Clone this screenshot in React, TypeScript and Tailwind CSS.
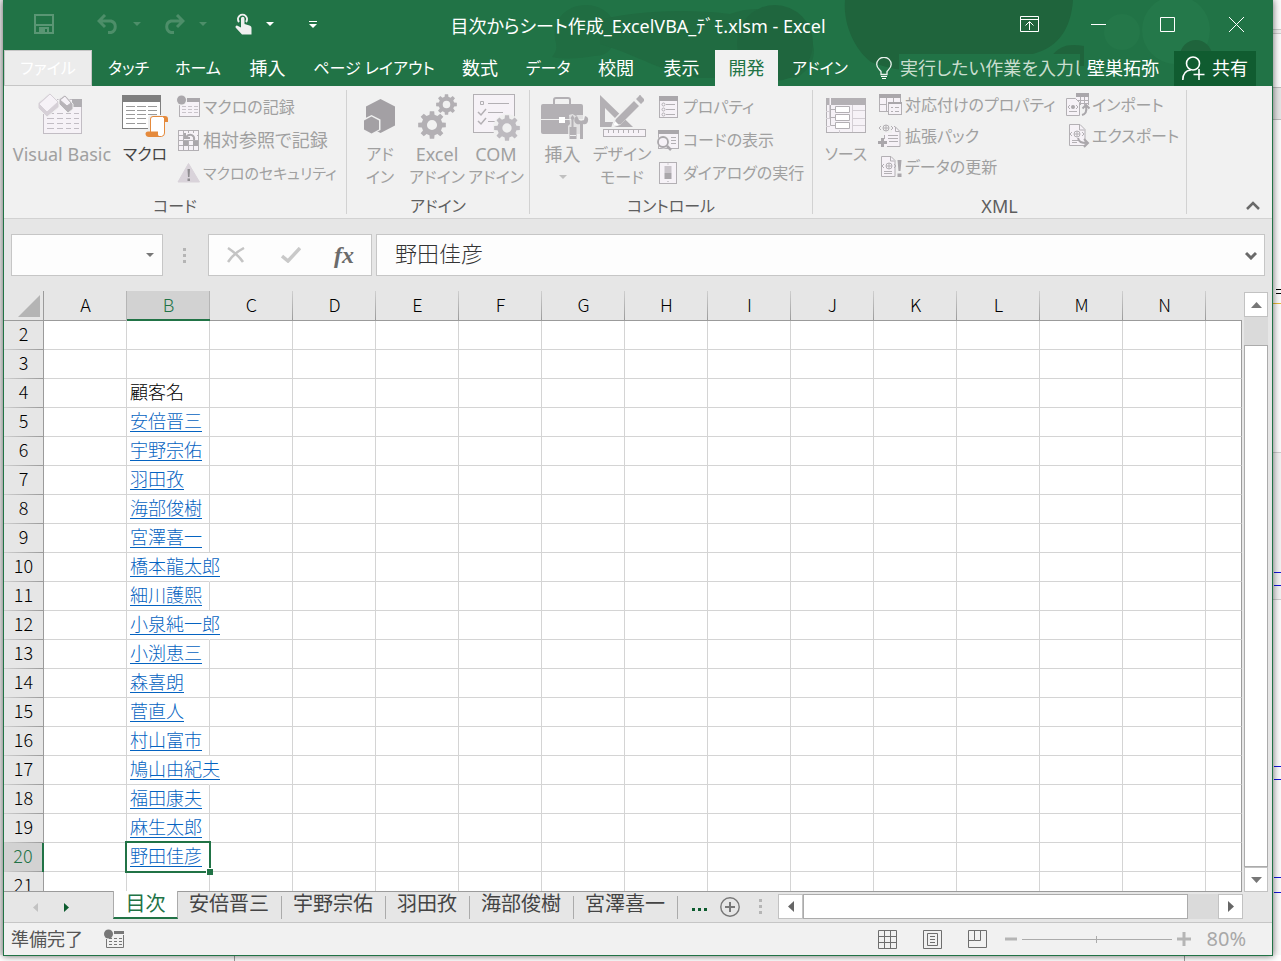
import React from "react";

const INK = "#b3b0b4";
const PALE = "#f6f2f7";

function gearPath(cx: number, cy: number, r: number, teeth: number) {
  const pts: string[] = [];
  const step = (Math.PI * 2) / teeth;
  for (let i = 0; i < teeth; i++) {
    const a = i * step - Math.PI / 2;
    const spots: [number, number][] = [
      [-0.31, 0.75],
      [-0.2, 1],
      [0.2, 1],
      [0.31, 0.75],
    ];
    for (const [d, k] of spots) {
      pts.push(
        `${(cx + Math.cos(a + d * step) * r * k).toFixed(2)} ${(cy + Math.sin(a + d * step) * r * k).toFixed(2)}`
      );
    }
  }
  const h = r * 0.36;
  return `M${pts.join("L")}Z M${cx - h} ${cy}a${h} ${h} 0 1 0 ${2 * h} 0a${h} ${h} 0 1 0 ${-2 * h} 0Z`;
}

function Gear({ cx, cy, r, fill }: { cx: number; cy: number; r: number; fill: string }) {
  return <path d={gearPath(cx, cy, r, 8)} fill={fill} fillRule="evenodd" />;
}

/* ---------- large ribbon icons ---------- */

function VisualBasicIcon() {
  return (
    <svg width="48" height="45" viewBox="38 8 48 45" fill="none" className="overflow-visible" aria-hidden="true">
      <rect x="43.5" y="13.5" width="38" height="34" fill={PALE} stroke="#c2bdc4" />
      <path d="M72 13h10v8H72z" fill="#b0aeb2" />
      <path
        d="M47 27.5h7m3 0h6m3 0h5m3 0h5M47 32.5h7m3 0h6m3 0h5m3 0h5M47 37.5h7m3 0h6m3 0h5m3 0h5M47 42.5h7m3 0h6m3 0h5m3 0h5"
        stroke="#c2bdc4"
      />
      <path d="M50 7l9 9v5L47 31l-9-9v-5z" fill="#d6d0d7" stroke="#f0f0f0" />
      <path d="M50 8l8 8-11 10-8-8z" fill={PALE} stroke="#d6d0d7" />
      <path d="M65 9l8 9v5l-5 4-9-9v-5z" fill="#b8b4b9" stroke="#f0f0f0" />
      <path d="M65 10l6 7-4 3-7-6z" fill={PALE} stroke="#b8b4b9" />
    </svg>
  );
}

function MacroIcon() {
  return (
    <svg width="48" height="45" viewBox="121 8 48 45" fill="none" aria-hidden="true">
      <rect x="122.5" y="9.5" width="38" height="33" fill="#fff" stroke="#7f7f7f" />
      <path d="M122 9h39v7h-39z" fill="#7f7f7f" />
      <path
        d="M126 20.5h9m2 0h9m2 0h9M126 24.500h9m2 0h9m2 0h9M126 28.500h9m2 0h9m2 0h9M126 32.500h9m2 0h9M126 37.500h9m2 0h9"
        stroke="#9a9a9a"
      />
      <path d="M148 44V33a4 4 0 0 1 4-4h17v9h-3v15h-20v-9z" fill="#f0f0f0" />
      <path d="M150.500 47V33a2.500 2.500 0 0 1 2.500-2.500h9.500a2 2 0 0 1 2 2V47a3.500 3.500 0 0 1-3 3.500h-8z" fill="#fff" stroke="#e58a3c" />
      <path d="M162 30h3a3 3 0 0 1 3 3v3h-4v-4z" fill="#e58a3c" />
      <path d="M145.500 48a2.500 2.500 0 0 1 2.500-2.500h10v3a3 3 0 0 0 3 2.500h-12a3.500 3.500 0 0 1-3.500-3z" fill="#e58a3c" />
    </svg>
  );
}

function StoreAddinIcon() {
  return (
    <svg width="34" height="38" viewBox="18 11 34 38" aria-hidden="true">
      <path d="M35.500 12L50 19.500v19L35.500 46 21 38.500v-19z" fill="#a3a0a4" />
      <path d="M26.500 28l9 4.500v10.500l-9 4.500-9-4.500V32.500z" fill="#f0f0f0" />
      <path d="M26.500 29.500l7.500 4v9l-7.500 4-7.500-4v-9z" fill="#a3a0a4" />
    </svg>
  );
}

function ExcelAddinIcon() {
  return (
    <svg width="42" height="48" viewBox="71 6 42 48" aria-hidden="true">
      <Gear cx={101.500} cy={17.500} r={10.500} fill={INK} />
      <Gear cx={87} cy={38} r={14} fill={INK} />
    </svg>
  );
}

function ComAddinIcon() {
  return (
    <svg width="50" height="48" viewBox="126 6 50 48" fill="none" aria-hidden="true">
      <rect x="128.500" y="7.500" width="41" height="38" fill={PALE} stroke={INK} />
      <path d="M135.500 14.500h3v3h-3z M143 16.500h21M143 25.500h15M143 34.500h7" stroke={INK} />
      <path d="M133 25l3 3 5-6M133 34l3 3 5-6" stroke={INK} strokeWidth="1.500" />
      <circle cx="162" cy="41" r="14" fill="#f0f0f0" />
      <Gear cx={162} cy={41} r={13} fill="#bdbabf" />
    </svg>
  );
}

function ToolboxIcon() {
  return (
    <svg width="46" height="46" viewBox="196 8 46 46" fill="none" className="overflow-visible" aria-hidden="true">
      <path d="M210 18v-4a2 2 0 0 1 2-2h12a2 2 0 0 1 2 2v4" stroke={INK} strokeWidth="2" />
      <rect x="197" y="18" width="42" height="30" rx="2" fill={INK} />
      <path d="M197 33.500h42" stroke="#f0f0f0" />
      <path d="M215 31h6v6h-6z" fill="#fff" />
      <path d="M225 29l3.500-1 3.500 2 1-1h9v25h-18V40l2-2z" fill="#f0f0f0" opacity=".75" />
      <path d="M228.500 29l2 3-1 2v7h3v12h-7V41h2v-7l-1-2z" fill={INK} />
      <path d="M226 49.500h6" stroke="#f0f0f0" />
      <path d="M233 30a4 4 0 0 0 3 8v15h3V38a4 4 0 0 0 2-8l-1 4-3 1-2-1z" fill={INK} />
    </svg>
  );
}

function DesignIcon() {
  return (
    <svg width="46" height="45" viewBox="255 8 46 45" fill="none" className="overflow-visible" aria-hidden="true">
      <path d="M256 9l33 32h-33z M261 22v14h14z" fill={INK} fillRule="evenodd" />
      <path d="M267 42l3-9 24-25 7 7-25 24z" fill="#f0f0f0" />
      <path d="M269 40l3-7 18-18 5 5-18 18z M292 13l3-3a1 1 0 0 1 2 0l3 3v2l-3 3z" fill={INK} />
      <path d="M269 40l2-5 4 4z" fill="#fff" />
      <rect x="259.500" y="43.500" width="42" height="7" fill={PALE} stroke={INK} />
      <path d="M264.500 44v3m5-3v3m5-3v3m5-3v3m5-3v3m5-3v3m5-3v3" stroke={INK} />
    </svg>
  );
}

function SourceIcon() {
  return (
    <svg width="42" height="38" viewBox="185 12 42 38" fill="none" aria-hidden="true">
      <rect x="186.500" y="12.500" width="39" height="34" fill={PALE} stroke={INK} />
      <path d="M186 12h40v7h-40z" fill={INK} />
      <path d="M189.500 12v20M212.500 19v27M212 24.500h13M212 32.500h13M212 39.500h13M186 25.500h4M186 32.500h4M186 40.500h4M199.500 44v3" stroke="#d3ced4" />
      <path d="M190.500 12v29" stroke={PALE} />
      <path d="M190.500 19v20.500h5M190.500 23.500h5M190.500 31.500h5" stroke={INK} />
      <path d="M195.500 20.500h14v6h-14zM195.500 28.500h14v6h-14zM195.500 36.500h14v6h-14z" fill="#fff" stroke={INK} />
    </svg>
  );
}

/* ---------- small ribbon icons (24 x 24) ---------- */

function Small({ children }: { children: React.ReactNode }) {
  return (
    <svg className="shrink-0 overflow-visible" width="24" height="24" viewBox="0 0 24 24" fill="none" aria-hidden="true">
      {children}
    </svg>
  );
}

function RecordIcon() {
  return (
    <Small>
      <rect x="2.500" y="4.500" width="20" height="17" fill={PALE} stroke={INK} />
      <path d="M10 3h13v4H10z" fill="#aaa7ab" />
      <path d="M5 11.500h4m2 0h4m2 0h4M5 14.500h4m2 0h4m2 0h4M5 17.500h4m2 0h4m2 0h4" stroke="#c9c4ca" />
      <circle cx="4.500" cy="5" r="5.500" fill="#f0f0f0" />
      <circle cx="4.500" cy="5" r="4.500" fill="#aaa7ab" />
    </Small>
  );
}

function RelativeIcon() {
  return (
    <Small>
      <rect x="1.500" y="2.500" width="20" height="20" fill={PALE} stroke={INK} />
      <path d="M6.500 2v20M11.500 2v20M16.500 2v20M1 7.500h20M1 12.500h20M1 17.500h20" stroke={INK} />
      <path d="M6 13h5v5H6z M16 13h5v5h-5z" fill="#aaa7ab" />
      <path d="M8 5h12v7H8z" fill={PALE} />
      <path d="M17 12c1-5-4-7-8-3M8 5v5h5" stroke="#aaa7ab" strokeWidth="2" />
    </Small>
  );
}

function WarningIcon() {
  return (
    <Small>
      <path d="M11.500 2.500L22.500 21H1z" fill="#d9d3da" stroke="#d9d3da" strokeLinejoin="round" />
      <path d="M10.500 8h2.500l-.5 8h-1.500z M10.500 17.500h2.500v2.500h-2.500z" fill="#8f8d90" />
    </Small>
  );
}

function PropertiesIcon() {
  return (
    <Small>
      <rect x="2.500" y="1.500" width="18" height="21" fill={PALE} stroke={INK} />
      <path d="M2 1h19v5H2z" fill="#aaa7ab" />
      <circle cx="6.500" cy="9.500" r="1.500" stroke={INK} />
      <circle cx="6.500" cy="14.500" r="1.500" stroke={INK} />
      <circle cx="6.500" cy="19.500" r="1.500" stroke={INK} />
      <path d="M9 9.500h9M9 14.500h9M9 19.500h9" stroke={INK} />
    </Small>
  );
}

function ViewCodeIcon() {
  return (
    <Small>
      <rect x="1.500" y="2.500" width="20" height="18" fill={PALE} stroke={INK} />
      <path d="M1 2h21v4H1z" fill="#aaa7ab" />
      <path d="M14 9.500h5M14 12.500h5M14 15.500h5" stroke={INK} />
      <circle cx="6.500" cy="14" r="6.500" fill="#f0f0f0" />
      <circle cx="6" cy="14" r="5" fill={PALE} stroke="#aaa7ab" strokeWidth="1.800" />
      <path d="M10 18l4 4" stroke="#aaa7ab" strokeWidth="2.500" />
    </Small>
  );
}

function DialogIcon() {
  return (
    <Small>
      <rect x="2.500" y="1.500" width="17" height="21" fill={PALE} stroke={INK} />
      <path d="M7.500 5h7v7h-7z" fill="#c9c4ca" />
      <path d="M7.500 12h7v6h-7z" fill="#aaa7ab" />
      <path d="M10.500 2.500h1v1h-1zM10.500 20h1v1h-1z" fill="#aaa7ab" />
    </Small>
  );
}

function MapPropsIcon() {
  return (
    <Small>
      <rect x="0.500" y="1.500" width="21" height="17" fill={PALE} stroke={INK} />
      <path d="M0 1h22v4H0z" fill="#aaa7ab" />
      <path d="M7.500 5v13M14.500 5v5M0 11.500h8" stroke={INK} />
      <rect x="9.500" y="9.500" width="13" height="12" fill={PALE} stroke={INK} />
      <path d="M9 9h14v2H9z" fill="#aaa7ab" />
      <path d="M12 14.500h2m2 0h4M12 18.500h2m2 0h4" stroke={INK} />
    </Small>
  );
}

function Globe({ x, y }: { x: number; y: number }) {
  return (
    <g stroke={INK}>
      <path d={`M${x - 5} ${y - 2}l-2 2 2 2M${x + 5} ${y - 2}l2 2-2 2`} />
      <circle cx={x} cy={y} r="3" />
      <path d={`M${x - 3} ${y}h6M${x} ${y - 3}v6`} />
    </g>
  );
}

function ExpansionIcon() {
  return (
    <Small>
      <path d="M5.500 9V2.500H16l5 5v15H5.500z" fill={PALE} />
      <path d="M15 2.500h1l5 5v15H8M5.500 11v4M16.500 3v4.500h4" stroke={INK} />
      <path d="M9 11.500h10M9 14.500h10M10 17.500h9" stroke={INK} />
      <path d="M1 0h12v9H1z" fill="#f0f0f0" />
      <Globe x={7} y={4} />
      <path d="M-1 18.500h9M3.500 14v9" stroke="#aaa7ab" strokeWidth="3" />
    </Small>
  );
}

function RefreshIcon() {
  return (
    <Small>
      <path d="M2.500 1.500H12l4 4v16H2.500z" fill={PALE} stroke={INK} />
      <path d="M11.500 2v4h4M5 16.500h8M5 18.500h8" stroke={INK} />
      <Globe x={10} y={11} />
      <path d="M18.500 5h4l-1 11h-2z M18.500 18.500h4v3.500h-4z" fill="#aaa7ab" />
    </Small>
  );
}

function ImportIcon() {
  return (
    <Small>
      <path d="M10 0h13v12H10z" fill={PALE} />
      <path d="M10 0h13v4H10z" fill="#aaa7ab" />
      <path d="M14.500 4v8M18.500 4v8M22.500 4v8M11 7.500h12M11 10.500h12" stroke={INK} />
      <path d="M0.500 5.500h9l4 4v13h-13z" fill={PALE} stroke={INK} />
      <path d="M3 18.500h8M4 12l-2 2 2 2M10 12l2 2-2 2" stroke={INK} />
      <circle cx="7" cy="14" r="2" fill="#aaa7ab" />
      <path d="M16 22c4-1 5-4 4-9M16.500 15.500l3.500-3.500 3.500 3.500" stroke="#aaa7ab" strokeWidth="2" />
    </Small>
  );
}

function ExportIcon() {
  return (
    <Small>
      <path d="M3.500 0.500H14l5 5v16H3.500z" fill={PALE} stroke={INK} />
      <path d="M13.500 1v5h5M6 16.500h6M6 18.500h5" stroke={INK} />
      <Globe x={11} y={10} />
      <path d="M12 14c1 4 3 5 9 5M18 15l4 4-4 4" stroke="#aaa7ab" strokeWidth="2" />
    </Small>
  );
}

/* ---------- title bar ---------- */

function TitlePattern() {
  return (
    <svg
      className="pointer-events-none absolute right-0 top-0 h-full w-[842px]"
      viewBox="430 0 842 86"
      preserveAspectRatio="xMaxYMin slice"
      aria-hidden="true"
    >
      <path d="M552 57c4-5 5-8 4-14-6-22 10-38 30-38 22 0 36 20 28 38-4 9-10 13-20 13-12 2-28 4-42 1z" fill="#206d42" />
      <path d="M600 20c30-8 80-12 130-6 30-12 80-4 84 36 0 14-8 22-18 28H700c-40-6-60-22-100-34z" fill="#206b41" />
      <circle cx="775" cy="43" r="38" fill="#1f663e" />
      <path d="M845 0h228c-2 30-16 46-34 52-16 6-40 8-58 6-26 12-70 20-110 4-18-14-28-40-26-62z" fill="#1f643c" />
      <path d="M1050 58c10-14 20-14 34-12v20h-34z" fill="#1f643c" />
      <circle cx="1176" cy="30" r="34" fill="#277a4b" opacity=".7" />
      <circle cx="1122" cy="32" r="18" fill="#277a4b" opacity=".6" />
      <circle cx="1196" cy="56" r="16" fill="#1f643c" />
    </svg>
  );
}

function Caret({ className }: { className: string }) {
  return (
    <svg className={className} width="8" height="4" viewBox="0 0 8 4" aria-hidden="true">
      <path d="M0 0h8L4 4z" fill="currentColor" />
    </svg>
  );
}

function TitleBar() {
  return (
    <header className="relative grid h-[50px] grid-cols-[1fr_auto_1fr] items-center text-white">
      <div className="flex items-center pl-[30px] pb-[2px]">
        <button aria-label="上書き保存" className="text-[#5a9674]">
          <svg width="20" height="20" viewBox="0 0 20 20" fill="none">
            <path d="M1 1h18v18H1z" stroke="currentColor" strokeWidth="2" />
            <path d="M2 10h16v2H2zM5 13h10v6h-2v-4h-2v4H5z" fill="currentColor" />
          </svg>
        </button>
        <button aria-label="元に戻す" className="ml-[43px] text-[#4d8e69]">
          <svg width="22" height="20" viewBox="0 0 22 20" fill="none">
            <path d="M2 7h12a6 6 0 0 1 0 11.500h-3M8 1L2 7l6 6" stroke="currentColor" strokeWidth="3" />
          </svg>
        </button>
        <Caret className="ml-[14px] text-[#4d8e69]" />
        <button aria-label="やり直し" className="ml-[22px] text-[#4d8e69]">
          <svg width="22" height="20" viewBox="0 0 22 20" fill="none">
            <path d="M20 7H8a6 6 0 0 0 0 11.500h3M14 1l6 6-6 6" stroke="currentColor" strokeWidth="3" />
          </svg>
        </button>
        <Caret className="ml-[14px] text-[#4d8e69]" />
        <button aria-label="タッチ/マウス モードの切り替え" className="ml-[28px]">
          <svg width="17" height="22" viewBox="0 0 17 22" fill="none">
            <path d="M4 9a4.500 4.500 0 1 1 7 0" stroke="#f0f0f0" strokeWidth="2" />
            <path d="M6 5.500a1.500 1.500 0 0 1 3.500 0V11l5 1.500c1.500.5 2 1.500 2 2.500v6.500H7L1 15c-1-1-.5-2.500 1-2.500l4 2z" fill="#f0f0f0" />
          </svg>
        </button>
        <Caret className="ml-[14px]" />
        <button aria-label="クイック アクセス ツール バーのユーザー設定" className="ml-[35px]">
          <svg width="8" height="7" viewBox="0 0 8 7">
            <path d="M0 0h8v1H0zM0 3h8L4 7z" fill="#fff" />
          </svg>
        </button>
      </div>
      <h1 className="pt-[2px] font-normal">目次からシート作成_ExcelVBA_ﾃﾞﾓ.xlsm - Excel</h1>
      <div className="flex items-center justify-end pb-[2px] pr-7">
        <button aria-label="リボンの表示オプション">
          <svg width="19" height="16" viewBox="0 0 19 16" fill="none" stroke="#fff">
            <path d="M.5.5h18v15H.5zM.5 3.500h18M9.500 14V6M5.500 9.500l4-4 4 4" />
          </svg>
        </button>
        <button aria-label="最小化" className="ml-[52px]">
          <svg width="15" height="15" viewBox="0 0 15 15" stroke="#fff">
            <path d="M0 7.500h15" />
          </svg>
        </button>
        <button aria-label="最大化" className="ml-[54px]">
          <svg width="15" height="15" viewBox="0 0 15 15" fill="none" stroke="#fff">
            <path d="M.5.5h14v14H.5z" />
          </svg>
        </button>
        <button aria-label="閉じる" className="ml-[54px]">
          <svg width="15" height="15" viewBox="0 0 15 15" stroke="#fff">
            <path d="M0 0l15 15M15 0L0 15" />
          </svg>
        </button>
      </div>
    </header>
  );
}

function RibbonTabs() {
  const tab = "h-full shrink-0 whitespace-nowrap text-center";
  return (
    <nav className="relative flex h-9 items-center text-white">
      <button className={`${tab} mr-1 w-[88px] border border-[#c6c6c6] bg-[#ececec] text-base text-white`}>ファイル</button>
      <button className={`${tab} w-[65px] text-base`}>タッチ</button>
      <button className={`${tab} w-[74px] text-base`}>ホーム</button>
      <button className={`${tab} w-[65px]`}>挿入</button>
      <button className={`${tab} w-[148px] text-base`}>ページ レイアウト</button>
      <button className={`${tab} w-[64px]`}>数式</button>
      <button className={`${tab} w-[72px] text-base`}>データ</button>
      <button className={`${tab} w-[64px]`}>校閲</button>
      <button className={`${tab} w-[67px]`}>表示</button>
      <button className={`${tab} w-[63px] bg-[#f1f1f1] text-[#217346]`}>開発</button>
      <button className={`${tab} w-[84px] text-base`}>アドイン</button>
      <label className="ml-[14px] flex items-center">
        <svg width="16" height="22" viewBox="0 0 16 22" fill="none" aria-hidden="true">
          <path d="M5 17.500v-3C3 12 .7 10.500.7 7.500a7.200 7.200 0 0 1 14.500 0c0 3-2.200 4.500-4.200 7v3z" stroke="#e8f1ec" strokeWidth="1.300" />
          <path d="M5 19h6v1H5zM6 21h4v1H6z" fill="#fff" />
        </svg>
        <span className="sr-only">操作アシスト</span>
        <input
          className="ml-[7px] h-7 w-[181px] bg-[#217346] pl-px placeholder:text-[#c9decf] focus:outline-none"
          placeholder="実行したい作業を入力してください"
        />
      </label>
      <button className="ml-[7px] shrink-0 whitespace-nowrap">壁巣拓弥</button>
      <button className="ml-auto mr-4 flex h-[35px] w-[82px] shrink-0 items-center bg-[#105c30] pl-2 whitespace-nowrap">
        <svg width="23" height="25" viewBox="0 0 23 25" fill="none" stroke="#fff" strokeWidth="1.600" aria-hidden="true">
          <circle cx="11" cy="7.500" r="6.500" />
          <path d="M.8 24c0-6 3-9.500 8-10M17 13v11M11.500 18.500h11" />
        </svg>
        <span className="ml-[7px]">共有</span>
      </button>
    </nav>
  );
}

/* ---------- ribbon ---------- */

const isKana = (s: string) => /^[ァ-ヶー]+$/.test(s);

function BigButton({
  icon,
  lines,
  className,
  children,
}: {
  icon: React.ReactNode;
  lines: string[];
  className: string;
  children?: React.ReactNode;
}) {
  return (
    <button className={`flex shrink-0 flex-col items-center ${className}`}>
      <span className="flex h-[53px] items-center">{icon}</span>
      {lines.map((l) => (
        <span key={l} className={`whitespace-nowrap ${isKana(l) ? "text-base/[23px]" : "text-lg/[23px]"}`}>
          {l}
        </span>
      ))}
      {children}
    </button>
  );
}

function SmallButton({
  icon,
  label,
  size = "text-base/6",
}: {
  icon: React.ReactNode;
  label: string;
  size?: string;
}) {
  return (
    <button className={`flex items-center gap-[2px] whitespace-nowrap ${size}`}>
      {icon}
      <span>{label}</span>
    </button>
  );
}

function Group({ title, className, children }: { title: string; className: string; children: React.ReactNode }) {
  return (
    <section className={`my-1 flex shrink-0 flex-col border-r border-[#d2d2d2] ${className}`}>
      <div className="flex flex-1 items-start">{children}</div>
      <h2 className={`text-center font-normal text-[#5e5e5e] ${isKana(title) ? "text-base/4" : "text-lg/4"}`}>
        {title}
      </h2>
    </section>
  );
}

function Ribbon() {
  return (
    <div className="flex h-[133px] border-b border-[#d2d2d2] bg-[#f1f1f1] text-[#a0a0a0]">
      <Group title="コード" className="w-[343px]">
        <BigButton className="w-[116px]" icon={<VisualBasicIcon />} lines={["Visual Basic"]} />
        <BigButton className="w-[50px] text-[#444]" icon={<MacroIcon />} lines={["マクロ"]} />
        <div className="ml-[7px] mt-[5px] flex flex-col gap-[9px]">
          <SmallButton icon={<RecordIcon />} label="マクロの記録" />
          <SmallButton icon={<RelativeIcon />} label="相対参照で記録" size="text-lg/6" />
          <SmallButton icon={<WarningIcon />} label="マクロのセキュリティ" size="text-[15px]/6" />
        </div>
      </Group>
      <Group title="アドイン" className="w-[183px]">
        <BigButton className="ml-[5px] w-[56px]" icon={<StoreAddinIcon />} lines={["アド", "イン"]} />
        <BigButton className="w-[58px]" icon={<ExcelAddinIcon />} lines={["Excel", "アドイン"]} />
        <BigButton className="w-[60px]" icon={<ComAddinIcon />} lines={["COM", "アドイン"]} />
      </Group>
      <Group title="コントロール" className="w-[283px]">
        <BigButton className="ml-1 w-[57px]" icon={<ToolboxIcon />} lines={["挿入"]}>
          <Caret className="mt-[9px] text-[#c0c0c0]" />
        </BigButton>
        <BigButton className="w-[62px]" icon={<DesignIcon />} lines={["デザイン", "モード"]} />
        <div className="ml-1 mt-[5px] flex flex-col gap-[9px]">
          <SmallButton icon={<PropertiesIcon />} label="プロパティ" />
          <SmallButton icon={<ViewCodeIcon />} label="コードの表示" />
          <SmallButton icon={<DialogIcon />} label="ダイアログの実行" />
        </div>
      </Group>
      <Group title="XML" className="w-[374px]">
        <BigButton className="ml-1 w-[58px]" icon={<SourceIcon />} lines={["ソース"]} />
        <div className="ml-1 mt-[3px] flex w-[187px] flex-col gap-[7px]">
          <SmallButton icon={<MapPropsIcon />} label="対応付けのプロパティ" />
          <SmallButton icon={<ExpansionIcon />} label="拡張パック" />
          <SmallButton icon={<RefreshIcon />} label="データの更新" />
        </div>
        <div className="mt-[3px] flex flex-col gap-[7px]">
          <SmallButton icon={<ImportIcon />} label="インポート" />
          <SmallButton icon={<ExportIcon />} label="エクスポート" />
        </div>
      </Group>
      <button aria-label="リボンを折りたたむ" className="mb-2 ml-auto mr-3 self-end text-[#6a6a6a]">
        <svg width="14" height="9" viewBox="0 0 14 9" fill="none">
          <path d="M1 8l6-6 6 6" stroke="currentColor" strokeWidth="2.500" />
        </svg>
      </button>
    </div>
  );
}

/* ---------- formula bar ---------- */

function Dots({ className }: { className: string }) {
  return (
    <span className={`flex flex-col gap-[3px] ${className}`} aria-hidden="true">
      <i className="size-[3px] bg-[#b5b5b5]" />
      <i className="size-[3px] bg-[#b5b5b5]" />
      <i className="size-[3px] bg-[#b5b5b5]" />
    </span>
  );
}

function FormulaBar() {
  return (
    <div className="flex h-[72px] pb-[15px] pl-[7px] pr-[7px] pt-[15px]">
      <div className="flex w-[152px] items-center border border-[#c6c6c6] bg-[#fdfdfd]">
        <input aria-label="名前ボックス" className="h-full min-w-0 flex-1 bg-transparent px-2 focus:outline-none" />
        <button aria-label="名前の一覧" className="mr-2 text-[#777]">
          <Caret className="" />
        </button>
      </div>
      <Dots className="ml-5 mr-[22px] justify-center" />
      <div className="flex w-[164px] items-center border border-[#c6c6c6] bg-[#fdfdfd] pl-[18px]">
        <button aria-label="キャンセル" className="text-[#c4c4c4]">
          <svg width="18" height="16" viewBox="0 0 18 16" fill="none">
            <path d="M1 1c6 4 11 8 15 14M17 1C11 4 5 9 1 15" stroke="currentColor" strokeWidth="2.500" />
          </svg>
        </button>
        <button aria-label="入力" className="ml-9 text-[#c9c9c9]">
          <svg width="20" height="16" viewBox="0 0 20 16" fill="none">
            <path d="M1 9l6 5L19 1" stroke="currentColor" strokeWidth="3.500" />
          </svg>
        </button>
        <button
          aria-label="関数の挿入"
          className="ml-[33px] pb-px font-['Liberation_Serif',serif] text-2xl font-bold italic text-[#6b6b6b]"
        >
          fx
        </button>
      </div>
      <div className="ml-1 flex flex-1 items-center border border-[#c6c6c6] bg-[#fdfdfd]">
        <input
          aria-label="数式バー"
          defaultValue="野田佳彦"
          className="min-w-0 flex-1 bg-transparent pb-[3px] pl-[18px] text-[22px] font-light text-[#333] focus:outline-none"
        />
        <button aria-label="数式バーの展開" className="mr-[7px] text-[#6a6a6a]">
          <svg width="12" height="9" viewBox="0 0 12 9" fill="none">
            <path d="M1 2l5 5 5-5" stroke="currentColor" strokeWidth="3" />
          </svg>
        </button>
      </div>
    </div>
  );
}

/* ---------- grid ---------- */

const COLS = ["A", "B", "C", "D", "E", "F", "G", "H", "I", "J", "K", "L", "M", "N"];
const NAMES: Record<number, string> = {
  5: "安倍晋三",
  6: "宇野宗佑",
  7: "羽田孜",
  8: "海部俊樹",
  9: "宮澤喜一",
  10: "橋本龍太郎",
  11: "細川護熙",
  12: "小泉純一郎",
  13: "小渕恵三",
  14: "森喜朗",
  15: "菅直人",
  16: "村山富市",
  17: "鳩山由紀夫",
  18: "福田康夫",
  19: "麻生太郎",
  20: "野田佳彦",
};
const ROWS = Array.from({ length: 20 }, (_, i) => i + 2);

function NameCell({ row }: { row: number }) {
  const name = NAMES[row];
  const spill = name !== undefined && name.length > 4;
  return (
    <td
      className={`relative h-[29px] border-b border-r border-b-[#d4d4d4] p-0 pl-[3px] align-top ${
        spill ? "border-r-transparent" : "border-r-[#d4d4d4]"
      } ${row === 20 ? "z-10" : ""}`}
    >
      <div className="h-7 w-0 whitespace-nowrap font-light leading-6">
        {row === 4 && "顧客名"}
        {name && (
          <a href="#" className="text-[#0563c1] underline decoration-1 underline-offset-[3px]">
            {name}
          </a>
        )}
      </div>
      {row === 20 && (
        <div className="pointer-events-none absolute -bottom-[2px] -left-[2px] -right-[2px] -top-[2px] border-2 border-[#217346]">
          <i className="absolute -bottom-[4px] -right-[4px] size-[7px] border-l border-t border-white bg-[#217346]" />
        </div>
      )}
    </td>
  );
}

function Grid() {
  return (
    <table className="w-full table-fixed border-separate border-spacing-0">
      <colgroup>
        <col className="w-[40px]" />
        {COLS.map((c) => (
          <col key={c} className="w-[83px]" />
        ))}
        <col />
      </colgroup>
      <thead>
        <tr className="h-[30px]">
          <th className="border-b border-r border-[#9b9b9b] p-0" aria-label="すべて選択">
            <svg className="ml-auto mr-[3px]" width="22" height="22" viewBox="0 0 22 22" aria-hidden="true">
              <path d="M22 0v22H0z" fill="#b4b4b4" />
            </svg>
          </th>
          {COLS.map((c) => (
            <th
              key={c}
              className={
                c === "B"
                  ? "border-b-2 border-b-[#217346] bg-[#d2d2d2] p-0 align-top font-light leading-[27px] text-[#217346] shadow-[inset_-1px_0_0_#b5b5b5,-1px_0_0_#b5b5b5]"
                  : "border-b border-b-[#9b9b9b] bg-[linear-gradient(to_bottom,#cfcfcf,#9b9b9b)] bg-[length:1px_100%] bg-right bg-no-repeat p-0 align-top font-light leading-[27px]"
              }
            >
              {c}
            </th>
          ))}
          <th className="border-b border-b-[#9b9b9b] p-0" />
        </tr>
      </thead>
      <tbody>
        {ROWS.map((r) => (
          <tr key={r} className="h-[29px]">
            <th
              scope="row"
              className={`h-[29px] border-r bg-[linear-gradient(to_right,#cfcfcf,#9b9b9b)] bg-[length:100%_1px] bg-bottom bg-no-repeat p-0 align-top font-light leading-6 ${
                r === 20
                  ? "border-r-2 border-[#217346] bg-[#d2d2d2] text-[#217346]"
                  : "border-[#9b9b9b]"
              }`}
            >
              {r}
            </th>
            <td className="border-b border-r border-[#d4d4d4] bg-white p-0" />
            <NameCell row={r} />
            {COLS.slice(2).map((c) => (
              <td key={c} className="border-b border-r border-[#d4d4d4] p-0" />
            ))}
            <td className="border-b border-r border-b-[#d4d4d4] border-r-[#9b9b9b] p-0" />
          </tr>
        ))}
      </tbody>
    </table>
  );
}

function VerticalScroll() {
  return (
    <div className="mr-1 mt-px flex w-6 flex-col">
      <button aria-label="上へスクロール" className="flex h-[25px] items-center justify-center border border-[#c2c2c2] bg-white">
        <svg width="11" height="6" viewBox="0 0 11 6">
          <path d="M5.500 0L11 6H0z" fill="#777" />
        </svg>
      </button>
      <div className="flex-1 bg-[#dadada] pt-7">
        <div className="h-full border border-[#ababab] bg-white" />
      </div>
      <button aria-label="下へスクロール" className="flex h-[25px] items-center justify-center border border-[#c2c2c2] bg-white">
        <svg width="11" height="6" viewBox="0 0 11 6">
          <path d="M0 0h11L5.500 6z" fill="#777" />
        </svg>
      </button>
    </div>
  );
}

function SheetBar() {
  const sheets = ["安倍晋三", "宇野宗佑", "羽田孜", "海部俊樹", "宮澤喜一"];
  return (
    <div className="flex h-[30px] items-start text-xl">
      <div className="flex w-[109px] items-center self-center pl-[29px]">
        <button aria-label="前のシート">
          <svg width="5" height="9" viewBox="0 0 5 9">
            <path d="M5 0v9L0 4.500z" fill="#c2c2c2" />
          </svg>
        </button>
        <button aria-label="次のシート" className="ml-[26px]">
          <svg width="5" height="9" viewBox="0 0 5 9">
            <path d="M0 0v9l5-4.500z" fill="#0d5c2f" />
          </svg>
        </button>
      </div>
      <button className="relative -mt-px h-7 w-[65px] shrink-0 border-b-2 border-l border-r border-b-[#217346] border-l-[#ababab] border-r-[#ababab] bg-white leading-[26px] text-[#217346]">
        目次
      </button>
      {sheets.map((s) => (
        <button key={s} className="flex h-[27px] shrink-0 items-end whitespace-nowrap text-[#444]">
          <span className="pl-[11px] pr-3 leading-[30px]">{s}</span>
          <i className="h-[23px] w-px bg-[#ababab]" />
        </button>
      ))}
      <button aria-label="その他のシート" className="ml-[14px] mt-4 flex shrink-0 gap-[3px]">
        <i className="size-[3px] bg-[#0d5c2f]" />
        <i className="size-[3px] bg-[#0d5c2f]" />
        <i className="size-[3px] bg-[#0d5c2f]" />
      </button>
      <button aria-label="新しいシート" className="ml-[13px] mt-[5px] shrink-0">
        <svg width="20" height="20" viewBox="0 0 20 20" fill="none" stroke="#777">
          <circle cx="10" cy="10" r="9.200" strokeWidth="1.400" />
          <path d="M10 5v10M5 10h10" strokeWidth="2" />
        </svg>
      </button>
      <Dots className="ml-[19px] mt-[7px] shrink-0" />
      <div className="ml-4 mr-[29px] mt-[2px] flex h-[25px] flex-1">
        <button aria-label="左へスクロール" className="flex w-[25px] items-center justify-center border border-[#c2c2c2] bg-white">
          <svg width="6" height="11" viewBox="0 0 6 11">
            <path d="M6 0v11L0 5.500z" fill="#666" />
          </svg>
        </button>
        <div className="flex-1 bg-[#dadada] pr-[30px]">
          <div className="h-full border border-[#ababab] bg-white" />
        </div>
        <button aria-label="右へスクロール" className="flex w-[25px] items-center justify-center border border-[#c2c2c2] bg-white">
          <svg width="6" height="11" viewBox="0 0 6 11">
            <path d="M0 0v11l6-5.500z" fill="#666" />
          </svg>
        </button>
      </div>
    </div>
  );
}

function StatusBar() {
  return (
    <footer className="flex h-[33px] items-center border-t border-[#c6c6c6] bg-[#f1f1f1] pl-[7px] text-[#555]">
      <span>準備完了</span>
      <button aria-label="マクロの記録" className="ml-[21px]">
        <svg width="20" height="20" viewBox="0 0 20 20" fill="none">
          <path d="M10 2h10v3H10z" fill="#777" />
          <path d="M2.500 10v8.500h17V6M5 9.500h3m2 0h3m2 0h3M5 12.500h3m2 0h3m2 0h3M5 15.500h3m2 0h3m2 0h3" stroke="#777" />
          <circle cx="4.500" cy="5" r="4.500" fill="#777" />
        </svg>
      </button>
      <div className="ml-auto flex items-center gap-[26px]">
        <button aria-label="標準">
          <svg width="19" height="19" viewBox="0 0 19 19" fill="none" stroke="#6e6e6e">
            <path d="M.5.5h18v18H.5zM6.500 0v19M12.500 0v19M0 6.500h19M0 12.500h19" />
          </svg>
        </button>
        <button aria-label="ページ レイアウト">
          <svg width="19" height="19" viewBox="0 0 19 19" fill="none" stroke="#6e6e6e">
            <path d="M.5.5h18v18H.5zM4.500 3.500h10v12h-10zM7 6.500h5M7 9.500h5M7 12.500h5" />
          </svg>
        </button>
        <button aria-label="改ページ プレビュー">
          <svg width="19" height="19" viewBox="0 0 19 19" fill="none" stroke="#6e6e6e">
            <path d="M.5.5h18v17H.5zM6.500 0v10.500h6V0M.5 10.500h6" />
          </svg>
        </button>
      </div>
      <button aria-label="縮小" className="ml-[18px]">
        <svg width="12" height="14" viewBox="0 0 12 14">
          <path d="M0 5.500h12v3H0z" fill="#b5b5b5" />
        </svg>
      </button>
      <input
        type="range"
        aria-label="ズーム"
        disabled
        className="ml-[5px] h-[7px] w-[150px] appearance-none bg-[linear-gradient(#ababab,#ababab),linear-gradient(#ababab,#ababab)] bg-[length:100%_1px,1px_7px] bg-center bg-no-repeat [&::-webkit-slider-thumb]:opacity-0"
      />
      <button aria-label="拡大" className="ml-[5px]">
        <svg width="14" height="14" viewBox="0 0 14 14">
          <path d="M0 5.500h5.500V0h3v5.500H14v3H8.500V14h-3V8.500H0z" fill="#b5b5b5" />
        </svg>
      </button>
      <button className="ml-4 mr-[26px] text-xl text-[#a8a8a8]">80%</button>
    </footer>
  );
}

function Desktop() {
  return (
    <div className="absolute inset-0 overflow-hidden bg-[#ececec]" aria-hidden="true">
      <div className="absolute inset-y-0 right-0 w-[9px] bg-[#fafafa]">
        <i className="absolute right-0 top-[29px] h-[5px] w-full border-y border-[#ccc] bg-[#eee]" />
        <i className="absolute right-0 top-[87px] h-[33px] w-full border-y border-[#bbb] bg-[#e4e4e4]" />
        <i className="absolute right-0 top-[289px] h-[5px] w-[5px] border-y border-black" />
        <i className="absolute right-0 top-[303px] h-px w-full bg-[#e8b93a]" />
        <i className="absolute right-0 top-[452px] h-[148px] w-full border-y border-[#ccc] bg-[#f1f1f1]" />
        <i className="absolute right-0 top-[572px] h-[14px] w-[7px] border-b border-t border-[#1414d8]" />
        <i className="absolute right-0 top-[766px] h-[14px] w-[7px] border-b border-t border-[#1414d8]" />
        <i className="absolute right-0 top-[877px] h-[16px] w-[7px] border-b border-t border-[#1414d8]" />
      </div>
      <div className="absolute inset-x-0 bottom-0 h-[6px] bg-white">
        <i className="absolute left-[234px] top-0 h-full w-px bg-[#999]" />
        <i className="absolute right-[96px] top-0 h-full w-px bg-[#999]" />
      </div>
    </div>
  );
}

export default function App() {
  return (
    <div className="relative flex h-screen flex-col pb-[5px] pl-[3px] pr-2 font-['Noto_Sans','Noto_Sans_CJK_JP',sans-serif] text-lg [font-feature-settings:'palt']">
      <Desktop />
      <main className="relative flex min-h-0 flex-1 flex-col border-x border-b border-[#217346] bg-[#e6e6e6] shadow-[0_0_7px_rgba(0,0,0,0.6)]">
        <div className="relative bg-[#217346]">
          <TitlePattern />
          <TitleBar />
          <RibbonTabs />
        </div>
        <Ribbon />
        <FormulaBar />
        <div className="flex min-h-0 flex-1 font-['Noto_Sans_CJK_JP',sans-serif]">
          <div className="mr-[2px] min-w-0 flex-1 overflow-hidden border-b border-[#9b9b9b] [&_tbody_td]:bg-white">
            <Grid />
          </div>
          <VerticalScroll />
        </div>
        <SheetBar />
        <StatusBar />
      </main>
    </div>
  );
}
